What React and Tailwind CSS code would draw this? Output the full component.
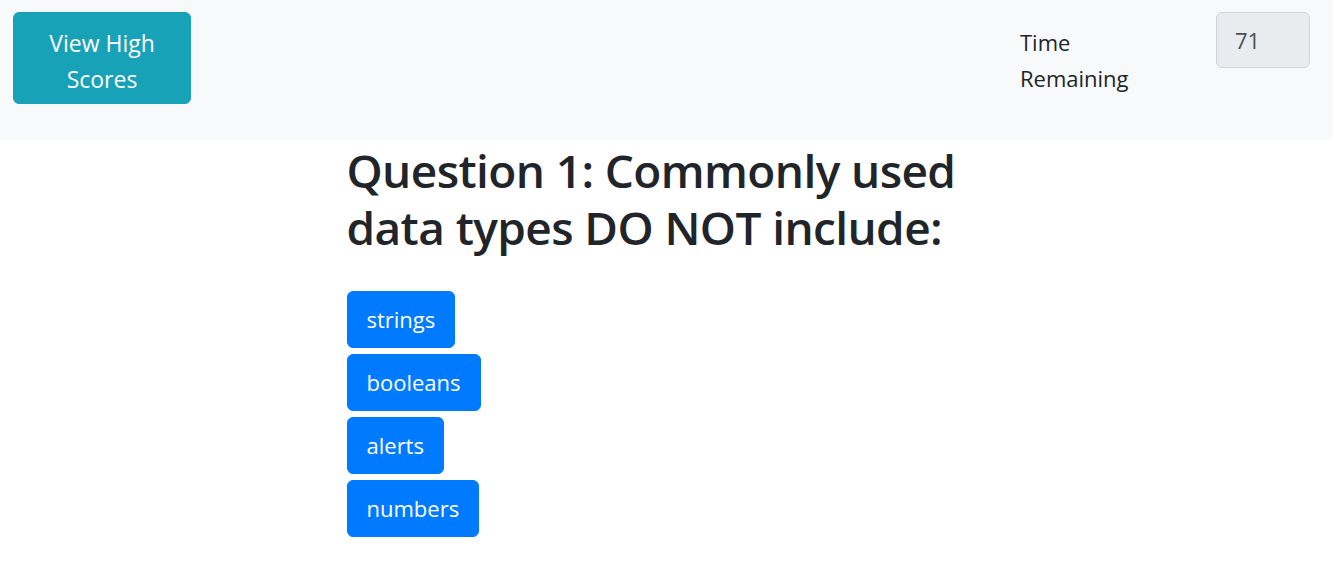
const answers = ['strings', 'booleans', 'alerts', 'numbers'];

export default function App() {
  return (
    <div className="min-h-screen bg-white text-[#212529] font-['Open_Sans',sans-serif]">
      {/* Header */}
      <div className="flex items-start justify-between bg-[#f8f9fa] h-[140px] pt-[12px] pl-[13px] pr-[23px]">
        <button className="w-[178px] rounded-[6px] border border-[#17a2b8] bg-[#17a2b8] px-[19px] pt-[12px] pb-[6px] text-[23px] leading-[36px] text-white">
          View High Scores
        </button>
        <div className="flex items-start">
          <div className="mr-[46px] w-[150px] pt-[12px] text-[22px] leading-[36px]">Time Remaining</div>
          <div className="flex h-[56px] w-[94px] items-center rounded-[6px] border border-[#ced4da] bg-[#e9ecef] px-[18px] text-[22px] text-[#495057]">
            71
          </div>
        </div>
      </div>

      {/* Question */}
      <div className="mx-auto w-[640px]">
        <h1 className="pt-[2px] text-[46px] font-semibold leading-[57px] tracking-[-0.6px]">
          Question 1: Commonly used data types DO NOT include:
        </h1>
        <div className="mt-[35px] flex flex-col items-start gap-[6px]">
          {answers.map((a) => (
            <button
              key={a}
              className="h-[57px] rounded-[6px] border border-[#007bff] bg-[#007bff] px-[19px] text-[22px] text-white"
            >
              {a}
            </button>
          ))}
        </div>
      </div>
    </div>
  );
}
